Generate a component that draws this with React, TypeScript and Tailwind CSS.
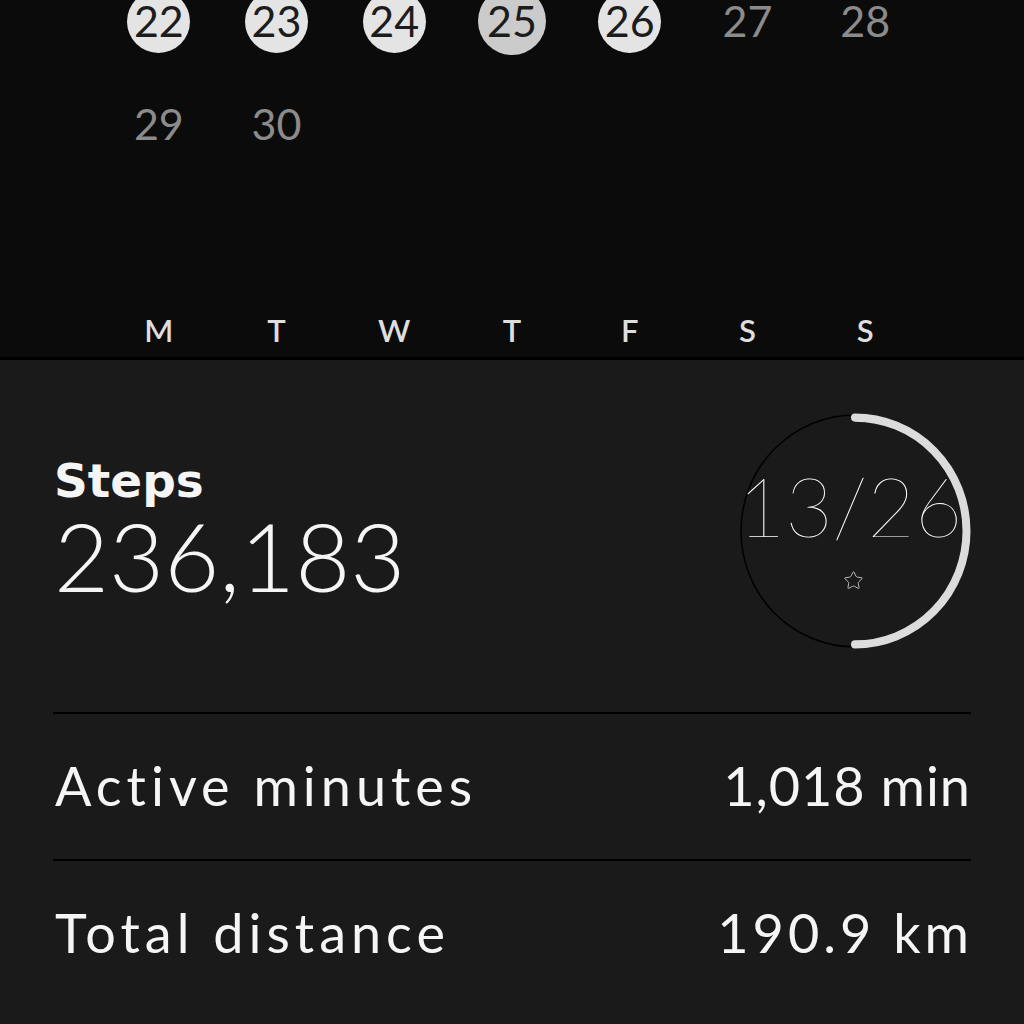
import { Star } from "lucide-react"

type Day = { n: number; done?: boolean; today?: boolean }

const weeks: Day[][] = [
  [
    { n: 22, done: true },
    { n: 23, done: true },
    { n: 24, done: true },
    { n: 25, done: true, today: true },
    { n: 26, done: true },
    { n: 27 },
    { n: 28 },
  ],
  [{ n: 29 }, { n: 30 }],
]

const weekdays = ["M", "T", "W", "T", "F", "S", "S"]

const stats = [
  { label: "Active minutes", value: "1,018 min", valueClass: "tracking-[1px] mr-0" },
  { label: "Total distance", value: "190.9 km", valueClass: "tracking-[4px] -mr-[2px]" },
]

function GoalRing() {
  return (
    <div className="relative w-[232px] h-[236px]">
      <svg className="absolute inset-0" width="232" height="236" viewBox="0 0 232 232" preserveAspectRatio="none">
        <circle cx="116" cy="116" r="114" fill="none" stroke="#000" strokeWidth="1.5" />
        <path
          d="M116 4.5 A111.5 111.5 0 0 1 116 227.5"
          fill="none"
          stroke="#dcdcdc"
          strokeWidth="8"
          strokeLinecap="round"
        />
      </svg>
      <div className="relative flex flex-col items-center pt-[42px] pr-[10px]">
        <div className="text-[82px] leading-[100px] font-thin text-white">13/26</div>
        <Star size={21} strokeWidth={1.1} className="mt-[15px] ml-[6px] text-[#bdbdbd]" />
      </div>
    </div>
  )
}

export default function App() {
  return (
    <div className="w-[1024px] h-[1024px] overflow-hidden bg-[#1a1a1a] font-['Lato',sans-serif]">
      {/* calendar, scrolled a little */}
      <div className="h-[360px] bg-[#0b0b0b] border-b-[3px] border-black flex flex-col">
        <div className="mx-[100px] mt-[-11px] grid grid-cols-7 gap-y-[39px]">
          {weeks.flat().map((d) => (
            <div key={d.n} className="h-[64px] flex items-center justify-center">
              {d.done ? (
                <div
                  className={
                    d.today
                      ? "w-[68px] h-[68px] rounded-full bg-[#cbcbcb] flex items-center justify-center text-[43px] text-[#1c1c1c]"
                      : "w-[63px] h-[63px] rounded-full bg-[#e4e4e4] flex items-center justify-center text-[43px] text-[#1c1c1c]"
                  }
                >
                  {d.n}
                </div>
              ) : (
                <span className="text-[43px] text-[#8b8b8b]">{d.n}</span>
              )}
            </div>
          ))}
        </div>
        <div className="mx-[100px] mt-auto mb-[11px] grid grid-cols-7">
          {weekdays.map((w, i) => (
            <div key={i} className="h-[32px] flex items-center justify-center text-[31px] font-semibold text-[#dedede]">
              {w}
            </div>
          ))}
        </div>
      </div>

      <div className="px-[53px]">
        <div className="h-[352px] flex items-center justify-between pb-[11px]">
          <div className="pl-[1px] pt-[15px]">
            <div className="text-[47px] leading-[34px] font-bold text-[#f5f5f5] font-['DejaVu_Sans',sans-serif]">Steps</div>
            <div className="text-[95px] leading-[114px] font-light text-[#f5f5f5]">236,183</div>
          </div>
          <GoalRing />
        </div>

        {stats.map((s) => (
          <div key={s.label} className="border-t-2 border-black h-[147px] flex items-center justify-between pb-[3px]">
            <span className="text-[54px] text-[#f5f5f5] tracking-[5px] pl-[2px]">{s.label}</span>
            <span className={`text-[54px] text-[#f5f5f5] ${s.valueClass}`}>{s.value}</span>
          </div>
        ))}
      </div>
    </div>
  )
}
